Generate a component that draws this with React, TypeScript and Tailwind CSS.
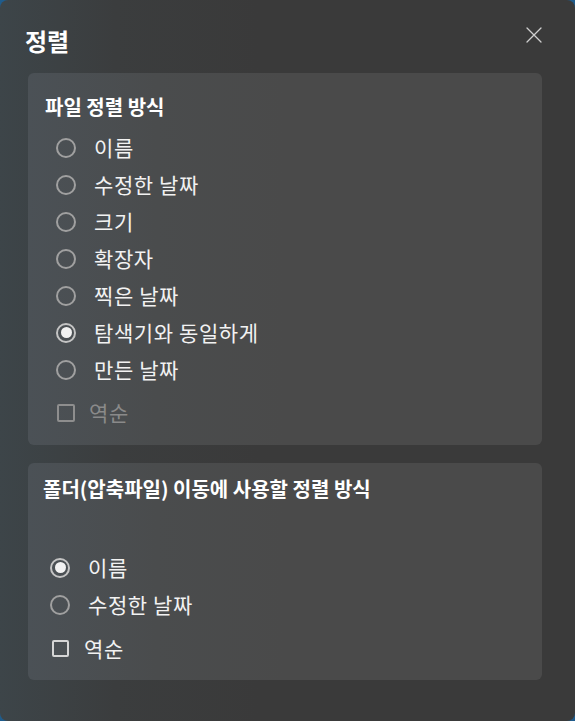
const font = { fontFamily: '"Noto Sans CJK KR", "Noto Sans", sans-serif' };

function CloseIcon() {
  return (
    <svg width="16" height="16" viewBox="0 0 16 16" fill="none" stroke="currentColor" strokeWidth="1.3" strokeLinecap="round">
      <path d="M1 1 L15 15 M15 1 L1 15" />
    </svg>
  );
}

function Radio({ label, checked }: { label: string; checked?: boolean }) {
  return (
    <div className="flex items-center h-[37px]">
      {checked ? (
        <span className="shrink-0 flex items-center justify-center w-[20px] h-[20px] rounded-full border-2 border-[#c4c4c4]">
          <span className="w-[11px] h-[11px] rounded-full bg-[#f2f2f2]" />
        </span>
      ) : (
        <span className="shrink-0 block w-[20px] h-[20px] rounded-full border-2 border-[#a0a0a0]" />
      )}
      <span className="ml-[18px] text-[21px] tracking-[0.6px] leading-none text-[#f2f2f2]">{label}</span>
    </div>
  );
}

function Checkbox({ label, disabled }: { label: string; disabled?: boolean }) {
  return (
    <div className="flex items-center h-[37px]">
      <span
        className={
          disabled
            ? "shrink-0 block w-[18px] h-[18px] border-2 border-[#8e8e8e] rounded-[2px]"
            : "shrink-0 block w-[17px] h-[17px] border-2 border-[#d6d6d6] rounded-[2px]"
        }
      />
      <span
        className={
          disabled
            ? "ml-[14px] text-[21px] tracking-[0.6px] leading-none text-[#8a8a8a]"
            : "ml-[15px] text-[21px] tracking-[0.6px] leading-none text-[#f2f2f2]"
        }
      >
        {label}
      </span>
    </div>
  );
}

export default function App() {
  const fileSorts = ["이름", "수정한 날짜", "크기", "확장자", "찍은 날짜", "탐색기와 동일하게", "만든 날짜"];

  return (
    <div className="w-[575px] h-[721px] bg-[#1f5c8c]" style={font}>
      <div className="w-full h-full rounded-lg bg-[linear-gradient(90deg,#3d4549_0%,#3b3d3e_20%,#3a3a3a_45%)] pl-[28px] pr-[33px] pt-[26px]">
        <div className="flex items-start justify-between h-[47px]">
          <h1 className="text-[24px] font-bold leading-[30px] text-white -ml-[3px]">정렬</h1>
          <button type="button" className="mt-[1px] text-[#cfcfcf]">
            <CloseIcon />
          </button>
        </div>

        <section className="rounded-md bg-[linear-gradient(90deg,#4b5156_0%,#4a4c4d_25%,#4a4a4a_50%)] h-[372px] pt-[22px] pl-[17px]">
          <h2 className="text-[20px] font-bold leading-[24px] text-white">파일 정렬 방식</h2>
          <div className="mt-[10px] ml-[11px] flex flex-col">
            {fileSorts.map((s) => (
              <Radio key={s} label={s} checked={s === "탐색기와 동일하게"} />
            ))}
            <div className="mt-[6px] ml-[1px]">
              <Checkbox label="역순" disabled />
            </div>
          </div>
        </section>

        <section className="mt-[18px] rounded-md bg-[linear-gradient(90deg,#4b5156_0%,#4a4c4d_25%,#4a4a4a_50%)] h-[217px] pt-[14px] pl-[15px]">
          <h2 className="text-[20px] font-bold leading-[24px] text-white">
            폴더(압축파일) 이동에 사용할 정렬 방식
          </h2>
          <div className="mt-[48px] ml-[7px] flex flex-col">
            <Radio label="이름" checked />
            <Radio label="수정한 날짜" />
            <div className="mt-[7px] ml-[2px]">
              <Checkbox label="역순" />
            </div>
          </div>
        </section>
      </div>
    </div>
  );
}
